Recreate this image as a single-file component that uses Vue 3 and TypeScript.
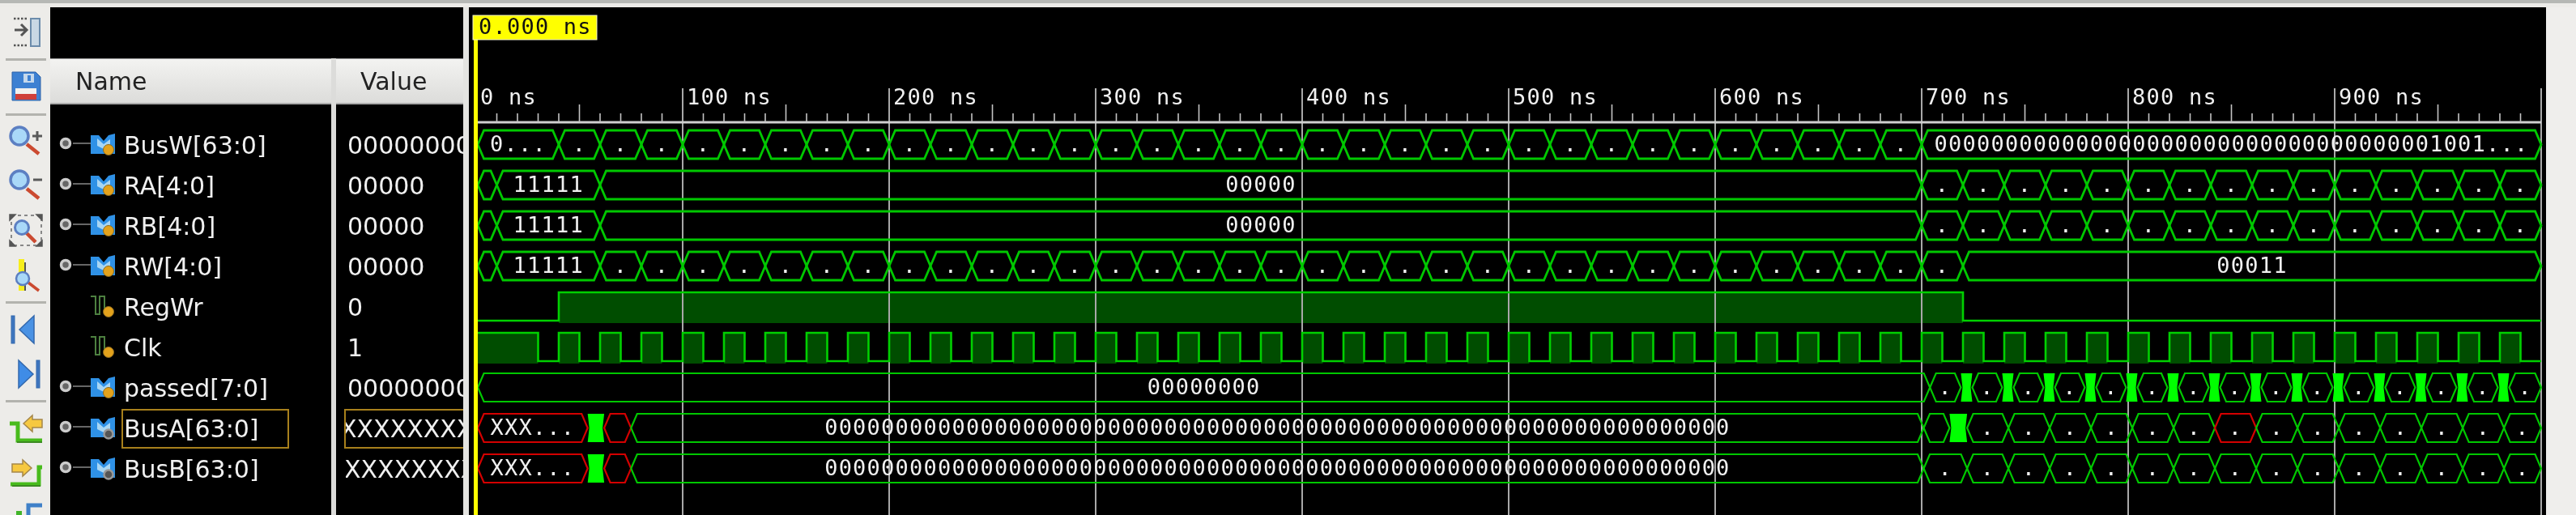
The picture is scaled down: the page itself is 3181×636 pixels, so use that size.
<template>
  <div class="sim">
    <div class="top-strip"></div>
    <div class="main">
      <div class="toolbar">
        <div class="tool">
          <svg width="62" height="50" viewBox="0 12 62 50">
            <path d="M17 23H35M17 56H35" stroke="#555" stroke-width="2.5" stroke-dasharray="2.5 2" fill="none" />
            <path d="M18 37H33M26 30l7 7-7 7" stroke="#555" stroke-width="3" fill="none" />
            <rect x="38" y="23" width="11" height="34" fill="#c9d8e4" stroke="#6c8cab" stroke-width="2" />
          </svg>
        </div>
        <div class="sep"></div>
        <div class="tool">
          <svg width="62" height="50" viewBox="0 82 62 50">
            <path d="M15 89H44L50 95V124H15Z" fill="#3d80d2" stroke="#2f63a8" />
            <rect x="29" y="91" width="13" height="11" fill="#c5d8ec" />
            <rect x="34" y="93" width="4" height="7" fill="#3d80d2" />
            <rect x="19" y="109" width="26" height="9" fill="#f2f0ee" />
            <rect x="19" y="116" width="26" height="7" fill="#cf3f3a" />
          </svg>
        </div>
        <div class="sep"></div>
        <div class="tool">
          <svg width="62" height="50" viewBox="0 148 62 50">
            <path d="M33 178L48 190" stroke="#cb4a30" stroke-width="4.5" />
            <circle cx="24" cy="168" r="11" fill="#a9d8f8" stroke="#5c7fc2" stroke-width="3.5" />
            <path d="M40 168H52M46 162V174" stroke="#5a5a5a" stroke-width="3" />
          </svg>
        </div>
        <div class="tool">
          <svg width="62" height="50" viewBox="0 203 62 50">
            <path d="M33 233L48 245" stroke="#cb4a30" stroke-width="4.5" />
            <circle cx="24" cy="222" r="11" fill="#a9d8f8" stroke="#5c7fc2" stroke-width="3.5" />
            <path d="M41 222H52" stroke="#5a5a5a" stroke-width="3" />
          </svg>
        </div>
        <div class="tool">
          <svg width="62" height="50" viewBox="0 260 62 50">
            <rect x="14" y="266" width="37" height="37" fill="none" stroke="#888" stroke-width="2" stroke-dasharray="4 4" />
            <path d="M12 265h7l-7 7ZM52 265h-7l7 7ZM12 304h7l-7-7ZM52 304h-7l7-7Z" fill="#555" stroke="#555" stroke-width="1.5" />
            <path d="M33 288L44 299" stroke="#cb4a30" stroke-width="4.5" />
            <circle cx="27" cy="281" r="8.5" fill="#a9d8f8" stroke="#5c7fc2" stroke-width="3" />
          </svg>
        </div>
        <div class="tool">
          <svg width="62" height="50" viewBox="0 314 62 50">
            <rect x="23" y="320" width="7" height="39" fill="#f7ee1c" />
            <rect x="30" y="324" width="2" height="35" fill="#555" />
            <path d="M35 349L48 359" stroke="#cb4a30" stroke-width="3.5" />
            <circle cx="28" cy="344" r="8" fill="#a9d8f8" stroke="#5c7fc2" stroke-width="2.5" />
          </svg>
        </div>
        <div class="sep"></div>
        <div class="tool">
          <svg width="62" height="50" viewBox="0 383 62 50">
            <rect x="14" y="390" width="4" height="34" fill="#3f76bf" stroke="#3368ad" />
            <path d="M24 407L42 390V424Z" fill="#4a92e4" stroke="#3368ad" stroke-width="1.5" />
          </svg>
        </div>
        <div class="tool">
          <svg width="62" height="50" viewBox="0 438 62 50">
            <rect x="45" y="445" width="4" height="34" fill="#3f76bf" stroke="#3368ad" />
            <path d="M41 462L23 445V479Z" fill="#3f8ce6" stroke="#3368ad" stroke-width="1.5" />
          </svg>
        </div>
        <div class="sep"></div>
        <div class="tool">
          <svg width="62" height="50" viewBox="0 504 62 50">
            <path d="M12 523H22V544H52" fill="none" stroke="#48bb1c" stroke-width="5" />
            <path d="M21 546H52" stroke="#3c8a22" stroke-width="2" />
            <path d="M29 523L40 513V518H52V528H40V533Z" fill="#f6c840" stroke="#a5874a" stroke-width="1.5" />
          </svg>
        </div>
        <div class="tool">
          <svg width="62" height="50" viewBox="0 559 62 50">
            <path d="M13 598H48V577H52" fill="none" stroke="#48bb1c" stroke-width="5" />
            <path d="M15 600H50" stroke="#3c8a22" stroke-width="2" />
            <path d="M39 578L28 568V573H15V583H28V588Z" fill="#f6c840" stroke="#a5874a" stroke-width="1.5" />
          </svg>
        </div>
        <div class="tool">
          <svg width="62" height="50" viewBox="0 615 62 50">
            <rect x="20" y="631" width="7" height="8" fill="#42b52a" />
            <path d="M35 640V624H52" fill="none" stroke="#3f80c8" stroke-width="5" />
          </svg>
        </div>
      </div>

      <div class="signals">
        <div class="signals-top"></div>
        <div class="columns">
          <div class="name-col">
            <div class="col-header name-header">Name</div>
            <div class="rows">
              <div v-for="s in signals" :key="s.name" class="row">
                <svg class="sig-icon" width="88" height="50" viewBox="0 0 88 50">
                  <template v-if="s.bus">
                    <circle cx="19" cy="23" r="5.5" fill="#666" stroke="#ccc" stroke-width="3.5" />
                    <path d="M28 23H50" stroke="#666" stroke-width="2" />
                    <path d="M50 13L60 13L66 20L72 13L80 11V36H50Z" fill="#2f91e6" />
                    <path d="M58 17L66 24L74 18V26L66 30L58 26Z" fill="#a8d6f4" />
                  </template>
                  <path v-else d="M50 12H56V34H61V12H67V34" fill="none" stroke="#4d8040" stroke-width="2" />
                  <circle v-if="s.gear" cx="72" cy="32" r="5.5" fill="#555" stroke="#999" stroke-width="2.5" />
                  <circle v-else cx="72" cy="31" r="6.5" fill="#e3a21c" stroke="#8a6a20" />
                </svg>
                <span class="name-text" :class="{ selected: s.selected }">{{ s.name }}</span>
              </div>
            </div>
          </div>
          <div class="value-col">
            <div class="col-header value-header">Value</div>
            <div class="rows">
              <div v-for="s in signals" :key="s.name" class="row">
                <span class="value-text" :class="{ selected: s.selected, unknown: s.gear }">{{ s.value }}</span>
              </div>
            </div>
          </div>
        </div>
      </div>

      <div class="gap"></div>

      <div class="wave">
        <svg width="2565" height="627" viewBox="579 9 2565 627">
          <rect v-for="(f, i) in fills" :key="'f' + i" :x="f.x" :y="f.y" :width="f.w" :height="f.h" fill="#004d00" />

          <line v-for="x in gridLines" :key="'g' + x" :x1="x" :x2="x" y1="109" y2="636" class="grid" />
          <line x1="590" x2="3138" y1="151" y2="151" class="ruler" />
          <line v-for="t in ticks" :key="'t' + t.x" :x1="t.x" :x2="t.x" :y1="t.top" y2="151" class="tick" />
          <text v-for="l in rulerLabels" :key="l.text" :x="l.x" y="129" class="mono light">{{ l.text }}</text>

          <path v-for="(p, i) in hexes" :key="'h' + i" :d="p.d" fill="none" :stroke="p.red ? '#d40000' : '#00c800'" :stroke-width="p.thin ? 2.2 : 2.8" stroke-linejoin="miter" />
          <path v-for="(d, i) in blocks" :key="'b' + i" :d="d" fill="#00ff00" />
          <path :d="regWrLine" class="level" />
          <path :d="clkLine" class="level" />
          <text v-for="(l, i) in busLabels" :key="'l' + i" :x="l.x" :y="l.y" class="mono light" text-anchor="middle">{{ l.text }}</text>

          <rect x="585" y="49" width="5" height="587" fill="#ffff00" />
          <rect x="584" y="19" width="153" height="30" fill="#ffff00" stroke="#f4f4d0" />
          <text x="591" y="42" class="mono dark">0.000 ns</text>
        </svg>
      </div>

      <div class="right-edge"></div>
    </div>
  </div>
</template>

<script setup lang="ts">
interface Signal {
  name: string
  value: string
  bus: boolean
  gear?: boolean
  selected?: boolean
}

interface Seg {
  from: number
  to: number
  label?: string
  red?: boolean
  block?: boolean
}

const nsX = (ns: number) => 588 + 2.55 * ns

const signals: Signal[] = [
  { name: 'BusW[63:0]', value: '0'.repeat(64), bus: true },
  { name: 'RA[4:0]', value: '00000', bus: true },
  { name: 'RB[4:0]', value: '00000', bus: true },
  { name: 'RW[4:0]', value: '00000', bus: true },
  { name: 'RegWr', value: '0', bus: false },
  { name: 'Clk', value: '1', bus: false },
  { name: 'passed[7:0]', value: '00000000', bus: true },
  { name: 'BusA[63:0]', value: 'X'.repeat(64), bus: true, gear: true, selected: true },
  { name: 'BusB[63:0]', value: 'X'.repeat(64), bus: true, gear: true }
]

// every 20 ns the bus value changes, too small to print so just a dot
const shortRun = (start: number, end: number, step = 20): Seg[] => {
  const out: Seg[] = []
  for (let t = start; t < end; t += step) {
    out.push({ from: t, to: Math.min(t + step, end), label: '.' })
  }
  return out
}

const zeros64 = '0'.repeat(64)

const busAStart: Seg[] = [
  { from: 0.8, to: 54, label: 'XXX...', red: true },
  { from: 54, to: 62, block: true },
  { from: 62, to: 75, red: true },
  { from: 75, to: 701, label: zeros64 }
]

const passedTail: Seg[] = []
for (let t = 720; t <= 980; t += 20) {
  passedTail.push({ from: t - 1, to: t + 4.5, block: true })
  passedTail.push({ from: t + 4.5, to: t === 980 ? 1000 : t + 19, label: '.' })
}

const busARun = (): Seg[] => {
  const out = shortRun(742, 982)
  out.forEach(s => {
    if (s.from === 842) s.red = true
  })
  return [...out, { from: 982, to: 1000, label: '.' }]
}

const buses: { top: number; segs: Seg[]; thin?: boolean }[] = [
  {
    top: 161,
    segs: [
      { from: 0.8, to: 40, label: '0...' },
      ...shortRun(40, 700),
      { from: 700, to: 1000, label: '0'.repeat(35) + '1001...' }
    ]
  },
  {
    top: 211,
    segs: [
      { from: 0.8, to: 10 },
      { from: 10, to: 60, label: '11111' },
      { from: 60, to: 700, label: '00000' },
      ...shortRun(700, 1000)
    ]
  },
  {
    top: 261,
    segs: [
      { from: 0.8, to: 10 },
      { from: 10, to: 60, label: '11111' },
      { from: 60, to: 700, label: '00000' },
      ...shortRun(700, 1000)
    ]
  },
  {
    top: 311,
    segs: [
      { from: 0.8, to: 10 },
      { from: 10, to: 60, label: '11111' },
      ...shortRun(60, 720),
      { from: 720, to: 1000, label: '00011' }
    ]
  },
  {
    top: 461,
    thin: true,
    segs: [
      { from: 0.8, to: 704, label: '00000000' },
      { from: 704, to: 719, label: '.' },
      ...passedTail
    ]
  },
  {
    top: 511,
    thin: true,
    segs: [
      ...busAStart,
      { from: 701, to: 713.5 },
      { from: 713.5, to: 722, block: true },
      { from: 722, to: 742, label: '.' },
      ...busARun()
    ]
  },
  {
    top: 561,
    thin: true,
    segs: [
      ...busAStart,
      { from: 701, to: 722, label: '.' },
      { from: 722, to: 742, label: '.' },
      ...shortRun(742, 982),
      { from: 982, to: 1000, label: '.' }
    ]
  }
]

const SLOPE = 7.5
const H = 35

const hexes: { d: string; red?: boolean; thin?: boolean }[] = []
const blocks: string[] = []
const busLabels: { x: number; y: number; text: string }[] = []

buses.forEach(bus => {
  const top = bus.top
  const mid = top + H / 2
  const bot = top + H
  bus.segs.forEach(seg => {
    const a = nsX(seg.from)
    const b = nsX(seg.to)
    if (seg.block) {
      blocks.push(`M${a} ${top}H${b}L${b - 2} ${mid}L${b} ${bot}H${a}L${a + 2} ${mid}Z`)
      return
    }
    hexes.push({
      d: `M${a} ${mid}L${a + SLOPE} ${top}H${b - SLOPE}L${b} ${mid}L${b - SLOPE} ${bot}H${a + SLOPE}Z`,
      red: seg.red,
      thin: bus.thin
    })
    if (seg.label) busLabels.push({ x: (a + b) / 2, y: top + 26, text: seg.label })
  })
})

const gridLines: number[] = []
const rulerLabels: { x: number; text: string }[] = []
const ticks: { x: number; top: number }[] = []
for (let t = 0; t <= 1000; t += 10) {
  const x = nsX(t)
  if (t % 100 === 0) {
    if (t > 0) gridLines.push(x)
    if (t < 1000) rulerLabels.push({ x: t === 0 ? 593 : x + 5, text: `${t} ns` })
  } else {
    ticks.push({ x, top: t % 50 === 0 ? 129 : 140 })
  }
}

const rise = nsX(40)
const fall = nsX(720)
const regWrLine = `M590 396H${rise}V361H${fall}V396H3138`

let clkLine = `M590 411H${nsX(30)}V446`
const fills = [
  { x: rise, y: 361, w: fall - rise, h: 38 },
  { x: 590, y: 411, w: nsX(30) - 590, h: 38 }
]
for (let t = 40; t < 1000; t += 20) {
  clkLine += `H${nsX(t)}V411H${nsX(t + 10)}V446`
  fills.push({ x: nsX(t), y: 411, w: 25.5, h: 38 })
}
clkLine += 'H3138'
</script>

<style scoped>
.sim {
  width: 3181px;
  height: 636px;
  overflow: hidden;
  background: #edece9;
  filter: blur(0.7px);
}

.top-strip {
  height: 9px;
  box-sizing: border-box;
  border-top: 4px solid #b6b8b5;
  background: #ecebe8;
}

.main {
  display: flex;
  height: 627px;
}

.toolbar {
  width: 62px;
  flex: none;
  display: grid;
  grid-template-rows: 56px 16px 52px 16px 48px 62px 52px 56px 12px 58px 52px 12px 56px 54px 58px;
  background: #edece9;
}

.tool {
  display: flex;
  align-items: center;
  justify-content: center;
}

.sep {
  align-self: center;
  height: 3px;
  margin: 0 5px 0 7px;
  background: #b3b3ae;
}

.signals {
  width: 510px;
  flex: none;
  background: #000;
  display: flex;
  flex-direction: column;
}

.signals-top {
  height: 63px;
}

.columns {
  flex: 1;
  display: flex;
  min-height: 0;
}

.name-col {
  width: 347px;
  flex: none;
}

.value-col {
  width: 163px;
  flex: none;
  box-sizing: border-box;
  border-left: 6px solid #dcdcda;
  overflow: hidden;
}

.col-header {
  height: 57px;
  box-sizing: border-box;
  display: flex;
  align-items: center;
  font-family: 'DejaVu Sans', sans-serif;
  font-size: 30px;
  color: #222;
  background: linear-gradient(#f3f3f1, #dcdcda);
  border-top: 1px solid #999;
  border-bottom: 2px solid #aaa;
}

.name-header {
  padding-left: 31px;
}

.value-header {
  padding-left: 30px;
}

.rows {
  padding-top: 25px;
}

.row {
  height: 50px;
  display: flex;
  align-items: center;
  font-family: 'DejaVu Sans', sans-serif;
  font-size: 30px;
  color: #f0f0f0;
  white-space: nowrap;
}

.sig-icon {
  flex: none;
}

.name-text {
  width: 207px;
  height: 49px;
  box-sizing: border-box;
  border: 2px solid transparent;
  padding-left: 1px;
  line-height: 45px;
}

.name-text.selected {
  border-color: #a8801c;
}

.value-text {
  width: 160px;
  height: 49px;
  flex: none;
  margin-left: 10px;
  box-sizing: border-box;
  border: 2px solid transparent;
  padding-left: 2px;
  line-height: 45px;
  overflow: hidden;
}

.value-text.unknown {
  text-indent: -4px;
}

.value-text.selected {
  border-color: #a8801c;
  text-indent: -9px;
}

.gap {
  width: 7px;
  flex: none;
  background: #e4e4e1;
}

.wave {
  width: 2565px;
  flex: none;
  background: #000;
}

.wave svg {
  display: block;
}

.right-edge {
  flex: 1;
  background: #efeeec;
}

.grid {
  stroke: #a8a8a8;
  stroke-width: 2;
}

.ruler {
  stroke: #cfcfcf;
  stroke-width: 3;
}

.tick {
  stroke: #c4c4c4;
  stroke-width: 1.6;
}

.level {
  fill: none;
  stroke: #00d000;
  stroke-width: 2.6;
}

.mono {
  font-family: 'DejaVu Sans Mono', monospace;
  font-size: 27px;
  letter-spacing: 1.22px;
}

.light {
  fill: #f0f0f0;
}

.dark {
  fill: #111;
}
</style>
